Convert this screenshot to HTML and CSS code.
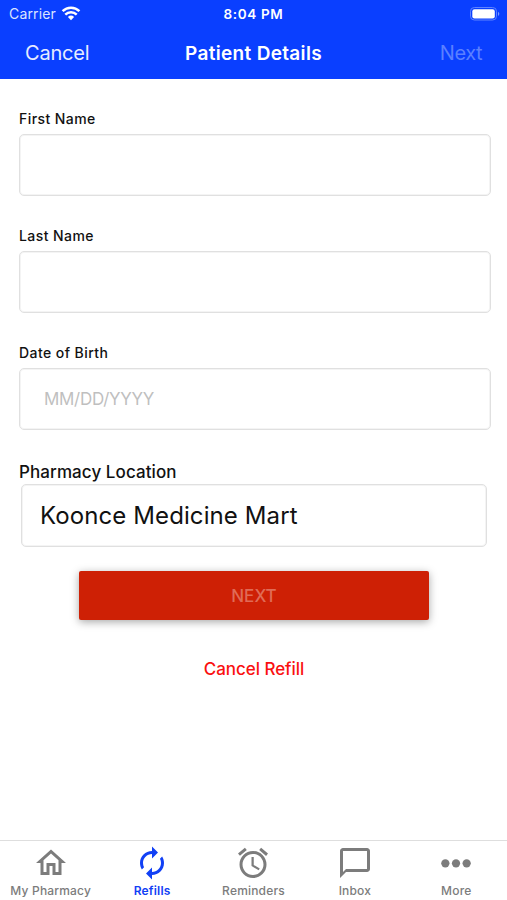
FILE: index.html
```html
<!DOCTYPE html>
<html lang="en">
<head>
<meta charset="utf-8">
<title>Patient Details</title>
<link rel="stylesheet" href="styles.css">
</head>
<body>
<div class="screen">
  <header class="header">
    <div class="status">
      <div class="status-left"><span class="carrier">Carrier</span>
        <svg class="wifi" viewBox="0 0 20 15" width="20" height="15"><path d="M10 14.2 6.9 11a4.5 4.5 0 0 1 6.2 0z" fill="#fff"/><path d="M4.3 8.6a8.1 8.1 0 0 1 11.4 0M1.6 5.2a12 12 0 0 1 16.8 0" fill="none" stroke="#fff" stroke-width="2.5"/></svg>
      </div>
      <span class="time">8:04 PM</span>
      <svg class="battery" viewBox="0 0 30 14" width="30" height="14"><rect x=".5" y=".5" width="26" height="12.5" rx="3.8" fill="none" stroke="#5f83ff"/><rect x="2.3" y="2.2" width="22.5" height="9.2" rx="2.2" fill="#fff"/><path d="M28 4.7v4.2c1.8-.8 1.8-3.4 0-4.2z" fill="#7c9bff"/></svg>
    </div>
    <nav class="navbar">
      <span class="nav-cancel">Cancel</span>
      <h1 class="title">Patient Details</h1>
      <span class="nav-next">Next</span>
    </nav>
  </header>
  <main class="form">
    <label class="field"><span class="label">First Name</span><input class="input" type="text"></label>
    <label class="field"><span class="label">Last Name</span><input class="input" type="text"></label>
    <label class="field"><span class="label">Date of Birth</span><input class="input" type="text" placeholder="MM/DD/YYYY"></label>
    <div class="location">
      <span class="location-label">Pharmacy Location</span>
      <div class="location-box"><span>Koonce Medicine Mart</span></div>
    </div>
    <button class="next">NEXT</button>
    <a class="cancel-refill">Cancel Refill</a>
  </main>
  <footer class="tabs">
    <div class="tab"><svg viewBox="0 0 24 24"><path d="M12 5.69l5 4.5V18h-2v-6H9v6H7v-7.81l5-4.5M12 3L2 12h3v8h6v-6h2v6h6v-8h3L12 3z"/></svg><span>My Pharmacy</span></div>
    <div class="tab active"><svg viewBox="0 0 24 24"><path d="M12 6v3l4-4-4-4v3c-4.42 0-8 3.58-8 8 0 1.57.46 3.03 1.24 4.26L6.7 14.8c-.45-.83-.7-1.79-.7-2.8 0-3.31 2.69-6 6-6zm6.76 1.74L17.3 9.2c.44.84.7 1.79.7 2.8 0 3.31-2.69 6-6 6v-3l-4 4 4 4v-3c4.42 0 8-3.58 8-8 0-1.57-.46-3.03-1.24-4.26z"/></svg><span>Refills</span></div>
    <div class="tab"><svg viewBox="0 0 24 24"><path d="M22 5.72l-4.6-3.86-1.29 1.53 4.6 3.86L22 5.72zM7.88 3.39L6.6 1.86 2 5.71l1.29 1.53 4.59-3.85zM12.5 8H11v6l4.75 2.85.75-1.23-4-2.37V8zM12 4c-4.97 0-9 4.03-9 9s4.02 9 9 9a9 9 0 0 0 0-18zm0 16c-3.87 0-7-3.13-7-7s3.13-7 7-7 7 3.13 7 7-3.13 7-7 7z"/></svg><span>Reminders</span></div>
    <div class="tab"><svg viewBox="0 0 24 24"><path d="M20 2H4c-1.1 0-2 .9-2 2v18l4-4h14c1.1 0 2-.9 2-2V4c0-1.1-.9-2-2-2zm0 14H6l-2 2V4h16v12z"/></svg><span>Inbox</span></div>
    <div class="tab"><svg viewBox="0 0 24 24"><circle cx="4.9" cy="12.2" r="2.75"/><circle cx="12" cy="12.2" r="2.75"/><circle cx="19.1" cy="12.2" r="2.75"/></svg><span>More</span></div>
  </footer>
</div>
</body>
</html>
```

FILE: styles.css
```css
* { box-sizing: border-box; }
body { margin: 0; background: #fff; color: #111; font-family: Inter, "Liberation Sans", sans-serif; }
.screen { height: 900px; display: flex; flex-direction: column; overflow: hidden; }
.header { height: 79px; background: #0a3fff; color: #fff; flex: none; }
.status { height: 27px; display: grid; grid-template-columns: 1fr auto 1fr; align-items: center; padding: 0 7px; }
.status-left { display: flex; align-items: center; gap: 5px; padding-left: 2px; }
.carrier { font-size: 14px; color: #dbe4ff; letter-spacing: .15px; }
.time { font-size: 13.5px; font-weight: 600; letter-spacing: .65px; }
.battery { justify-self: end; }
.navbar { height: 52px; display: grid; grid-template-columns: 1fr auto 1fr; align-items: center; padding: 0 25px; line-height: 52px; }
.nav-cancel { font-size: 20px; color: #e6ecff; letter-spacing: -.2px; }
.title { margin: 0; font-size: 19px; font-weight: 600; letter-spacing: .32px; padding-top: 1px; line-height: 51px; }
.nav-next { justify-self: end; font-size: 20px; color: #5b80ff; letter-spacing: -.5px; }
.form { flex: 1; padding: 31px 16px 0 19px; display: flex; flex-direction: column; }
.field { display: block; height: 117px; }
.label { display: block; width: max-content; height: 24px; line-height: 18px; font-size: 14px; font-weight: 500; letter-spacing: .43px; }
.input, .location-box { border: 1px solid #e0e0e0; border-radius: 5px; box-shadow: inset 0 0 0 1px #f4f4f4; }
.input { display: block; width: 100%; height: 62px; padding: 0 24px; font: 17px Inter, sans-serif; letter-spacing: -.3px; background: #fff; outline: 0; }
.input::placeholder { color: #bfbfbf; opacity: 1; }
.location { height: 110px; }
.location-label { display: block; width: max-content; height: 23px; line-height: 23px; font-size: 17px; font-weight: 500; letter-spacing: .08px; }
.location-box { height: 63px; margin: 0 4px 0 2px; padding: 0 18px; display: flex; align-items: center; font-size: 24px; letter-spacing: .1px; }
.next { width: 350px; height: 49px; margin-left: 60px; flex: none; border: 0; border-radius: 2px; background: #ce2005; color: #e06b57; font: 500 17px Inter, sans-serif; box-shadow: 0 2px 9px rgba(0,0,0,.35); }
.cancel-refill { align-self: center; margin-top: 38px; margin-right: 2px; line-height: 22px; font-size: 17px; font-weight: 500; letter-spacing: -.05px; color: #fa1010; }
.tabs { height: 60px; flex: none; border-top: 1px solid #dedede; display: grid; grid-template-columns: repeat(5, 1fr); }
.tab { display: flex; flex-direction: column; align-items: center; padding-top: 4px; color: #7c7c7c; font-size: 12px; font-weight: 500; letter-spacing: .18px; line-height: 14px; white-space: nowrap; }
.tab svg { width: 36px; height: 36px; fill: currentColor; margin-bottom: 3px; }
.tab.active { color: #1140f5; font-weight: 600; }
```
